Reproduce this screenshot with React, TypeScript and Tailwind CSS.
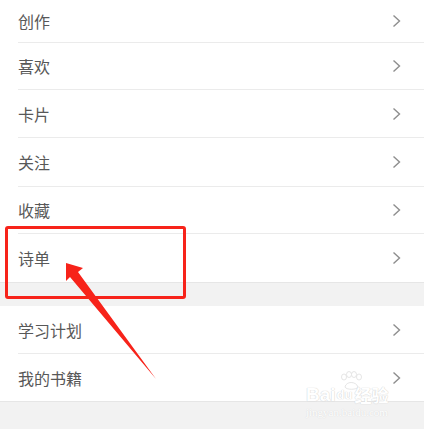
import React from "react";

const Chevron = () => (
  <svg width="9" height="14" viewBox="0 0 9 14" className="shrink-0">
    <polyline points="1.5,1.5 7.5,7 1.5,12.5" fill="none" stroke="#8e8e8e" strokeWidth="1.4" />
  </svg>
);

function Row({ label, h, divider }: { label: string; h: string; divider: boolean }) {
  return (
    <div className="pl-[18px] bg-white">
      <div className={`flex items-center justify-between pr-[23px] ${h} ${divider ? "border-b border-[#ebebeb]" : ""}`}>
        <span className="text-[16px] text-[#585858] leading-none">{label}</span>
        <Chevron />
      </div>
    </div>
  );
}

export default function App() {
  return (
    <div
      className="relative w-[424px] h-[429px] overflow-hidden bg-[#f2f2f2]"
      style={{ fontFamily: '"Noto Sans CJK SC", "Noto Sans", sans-serif' }}
    >
      <div className="bg-white">
        <Row label="创作" h="h-[43px]" divider />
        <Row label="喜欢" h="h-[47px]" divider />
        <Row label="卡片" h="h-[48px]" divider />
        <Row label="关注" h="h-[49px]" divider />
        <Row label="收藏" h="h-[47px]" divider />
        <Row label="诗单" h="h-[48px]" divider={false} />
      </div>
      <div className="h-[24px] border-t border-[#e6e6e6] bg-[#f2f2f2]" />
      <div className="bg-white border-b border-[#e6e6e6]">
        <Row label="学习计划" h="h-[48px]" divider />
        <Row label="我的书籍" h="h-[47px]" divider={false} />
      </div>

      {/* watermark */}
      <svg className="absolute left-[338px] top-[371px] pointer-events-none" width="26" height="20" viewBox="0 0 26 20">
        <g fill="#ffffff" stroke="#dedede" strokeWidth="0.8">
          <ellipse cx="6" cy="6" rx="2.5" ry="3" />
          <ellipse cx="11" cy="3.5" rx="2.5" ry="3" />
          <ellipse cx="16" cy="3.5" rx="2.5" ry="3" />
          <ellipse cx="21" cy="6" rx="2.5" ry="3" />
          <path d="M7 16 C8 10 18 10 20 16 C19 19 8 19 7 16 Z" />
        </g>
      </svg>
      <div className="absolute left-[306px] top-[386px] flex flex-col items-start pointer-events-none">
        <div
          className="flex items-end h-[18px] text-[19px] leading-[18px] font-bold text-white"
          style={{ textShadow: "0 0 1px #cfcfcf, 0 0 1px #d8d8d8" }}
        >
          <span style={{ fontFamily: '"Liberation Sans", sans-serif' }}>Bai</span>
          <span className="text-[13px] ml-[1px]" style={{ fontFamily: '"Liberation Sans", sans-serif' }}>du</span>
          <span className="text-[17px] ml-[2px]">经验</span>
        </div>
        <div
          className="text-[11px] leading-[11px] mt-[3px] text-white"
          style={{ textShadow: "0 0 1px #cccccc", fontFamily: '"Liberation Serif", serif' }}
        >
          jingyan.baidu.com
        </div>
      </div>

      {/* annotation rectangle */}
      <div className="absolute left-[5px] top-[226px] w-[181px] h-[73px] border-[3px] border-[#f7231a] rounded-[3px] pointer-events-none" />

      {/* annotation arrow */}
      <svg className="absolute left-0 top-0 pointer-events-none" width="424" height="429" viewBox="0 0 424 429">
        <polygon points="66,263 83,268 78,272 156,379 70,277 66,281" fill="#f7231a" />
      </svg>
    </div>
  );
}
